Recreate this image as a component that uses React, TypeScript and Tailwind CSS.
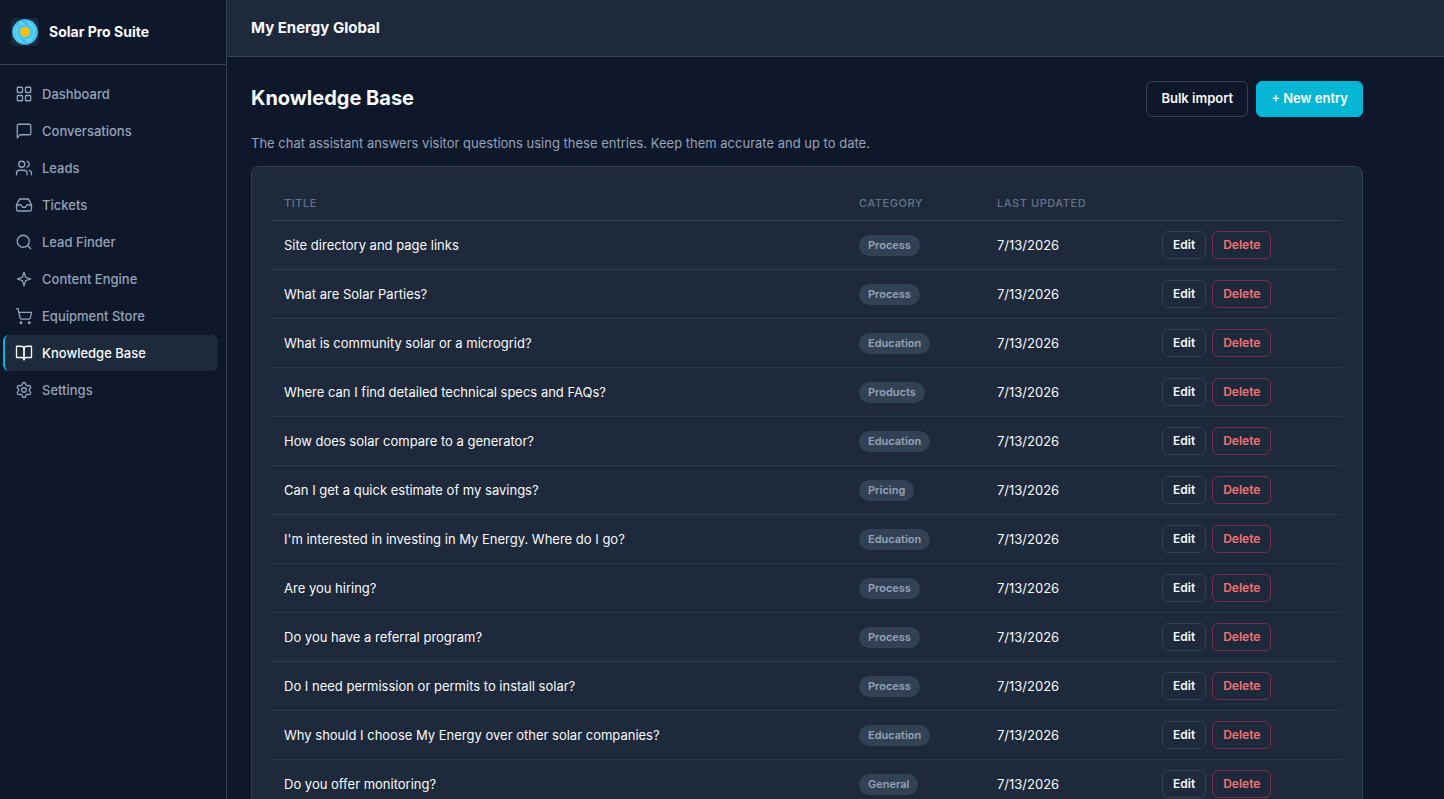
import clsx from 'clsx'
import {
  Inbox,
  LayoutGrid,
  Search,
  Settings,
  ShoppingCart,
  Users,
} from 'lucide-react'
import { ComponentType, SVGProps } from 'react'

type IconProps = SVGProps<SVGSVGElement>

const Stroke = ({ children, ...props }: IconProps) => (
  <svg
    viewBox="0 0 24 24"
    fill="none"
    stroke="currentColor"
    strokeLinecap="round"
    strokeLinejoin="round"
    {...props}
  >
    {children}
  </svg>
)

const Chat = (props: IconProps) => (
  <Stroke {...props}>
    <path d="M21 15a2 2 0 0 1-2 2H7l-4 4V5a2 2 0 0 1 2-2h14a2 2 0 0 1 2 2z" />
  </Stroke>
)

const Spark = (props: IconProps) => (
  <Stroke {...props}>
    <path d="M12 3l2.2 6.8L21 12l-6.800 2.200L12 21l-2.200-6.800L3 12l6.800-2.200z" />
  </Stroke>
)

const Book = (props: IconProps) => (
  <Stroke {...props}>
    <path d="M2 3h6a4 4 0 0 1 4 4v14a3 3 0 0 0-3-3H2z" />
    <path d="M22 3h-6a4 4 0 0 0-4 4v14a3 3 0 0 1 3-3h7z" />
  </Stroke>
)

const Logo = () => (
  <svg className="size-7 shrink-0" viewBox="0 0 28 28" aria-hidden="true">
    <rect width="28" height="28" rx="5" fill="#1b2a3f" />
    <circle cx="14" cy="14" r="12.8" fill="#45c6f3" />
    <path d="M11 3.500c3-.5 5.500 1 6.500 3.500-2-1.500-4-2-6.500-3.500z" fill="#1b7cc0" />
    <path d="M17 24.500c-3 .5-5.500-1-6.500-3.500 2 1.500 4 2 6.500 3.500z" fill="#1b7cc0" />
    <path d="M8.500 5.500c8-3 15 1.500 14.500 9-.5 5-4 7.500-8 7.500" fill="none" stroke="#8be0f9" strokeWidth="0.800" />
    <path d="M19.500 22.500c-8 3-15-1.500-14.500-9 .5-5 4-7.500 8-7.500" fill="none" stroke="#8be0f9" strokeWidth="0.800" />
    <circle cx="14" cy="14" r="5" fill="#fbbf14" />
  </svg>
)

type NavItem = {
  label: string
  icon: ComponentType<{ className?: string; strokeWidth?: number }>
}

const navItems: NavItem[] = [
  { label: 'Dashboard', icon: LayoutGrid },
  { label: 'Conversations', icon: Chat },
  { label: 'Leads', icon: Users },
  { label: 'Tickets', icon: Inbox },
  { label: 'Lead Finder', icon: Search },
  { label: 'Content Engine', icon: Spark },
  { label: 'Equipment Store', icon: ShoppingCart },
  { label: 'Knowledge Base', icon: Book },
  { label: 'Settings', icon: Settings },
]

const entries = [
  { title: 'Site directory and page links', category: 'Process' },
  { title: 'What are Solar Parties?', category: 'Process' },
  { title: 'What is community solar or a microgrid?', category: 'Education' },
  { title: 'Where can I find detailed technical specs and FAQs?', category: 'Products' },
  { title: 'How does solar compare to a generator?', category: 'Education' },
  { title: 'Can I get a quick estimate of my savings?', category: 'Pricing' },
  { title: "I'm interested in investing in My Energy. Where do I go?", category: 'Education' },
  { title: 'Are you hiring?', category: 'Process' },
  { title: 'Do you have a referral program?', category: 'Process' },
  { title: 'Do I need permission or permits to install solar?', category: 'Process' },
  { title: 'Why should I choose My Energy over other solar companies?', category: 'Education' },
  { title: 'Do you offer monitoring?', category: 'General' },
]

const Sidebar = () => (
  <aside className="flex w-[227px] shrink-0 flex-col border-r border-[#334155]">
    <div className="flex h-[65px] items-center gap-2.5 border-b border-[#334155] px-[11px]">
      <Logo />
      <span className="text-sm font-bold">Solar Pro Suite</span>
    </div>
    <nav className="flex flex-col gap-px pt-[11px] pr-2 pl-[3px]">
      {navItems.map(({ label, icon: Icon }) => {
        const active = label === 'Knowledge Base'
        return (
          <a
            key={label}
            href="#"
            aria-current={active ? 'page' : undefined}
            className={clsx(
              'flex h-9 items-center gap-[9px] rounded-md border-l-2 pl-2.5 text-[13px] leading-5 font-medium',
              active
                ? 'border-[#06b6d4] bg-[#1e293b] text-[#f8fafc]'
                : 'border-transparent text-[#94a3b8]'
            )}
          >
            <Icon className="size-[18px] shrink-0" strokeWidth={1.75} />
            {label}
          </a>
        )
      })}
    </nav>
  </aside>
)

const EntryTable = () => (
  <table className="w-full table-fixed text-left">
    <thead>
      <tr className="h-[33px] border-b border-[#334155] text-[11px] tracking-wider text-[#64748b] uppercase">
        <th className="px-3 font-medium">Title</th>
        <th className="w-[138px] px-3 font-medium">Category</th>
        <th className="w-[165px] px-3 font-medium">Last updated</th>
        <th className="w-[192px] px-3" aria-label="Actions" />
      </tr>
    </thead>
    <tbody>
      {entries.map(({ title, category }) => (
        <tr key={title} className="h-[49px] border-b border-[#334155]/60 text-[13px]">
          <td className="px-3 pt-0.5">{title}</td>
          <td className="px-3 pt-0.5">
            <span className="inline-flex h-[21px] items-center rounded-full bg-[#334155] px-[9px] text-[11px] font-semibold text-[#94a3b8]">
              {category}
            </span>
          </td>
          <td className="px-3 pt-0.5">7/13/2026</td>
          <td className="px-3">
            <div className="flex gap-1.5">
              <button
                type="button"
                className="h-7 rounded-md border border-[#334155] px-2.5 text-xs font-semibold"
              >
                Edit
              </button>
              <button
                type="button"
                className="h-7 rounded-md border border-[#f43f5e]/40 px-2.5 text-xs font-semibold text-[#f87171]"
              >
                Delete
              </button>
            </div>
          </td>
        </tr>
      ))}
    </tbody>
  </table>
)

export const App = () => (
  <div className="flex h-screen overflow-hidden bg-[#0f172a] font-[Inter,sans-serif] text-[#f8fafc]">
    <Sidebar />
    <div className="flex min-w-0 flex-1 flex-col">
      <header className="flex h-[57px] shrink-0 items-center border-b border-[#334155] bg-[#1e293b] px-6">
        <span className="text-[15px] font-bold">My Energy Global</span>
      </header>
      <main className="min-h-0 max-w-[1160px] flex-1 overflow-hidden p-6">
        <div className="flex items-start justify-between">
          <h1 className="text-xl leading-[34px] font-bold">Knowledge Base</h1>
          <div className="flex gap-2">
            <button
              type="button"
              className="h-9 rounded-md border border-[#334155] px-3.5 text-[13px] font-semibold"
            >
              Bulk import
            </button>
            <button
              type="button"
              className="h-9 rounded-md border border-[#06b6d4] bg-[#06b6d4] px-3.5 text-[13px] font-semibold text-white"
            >
              + New entry
            </button>
          </div>
        </div>
        <p className="mt-4 mb-3 text-[13px] leading-[21px] text-[#94a3b8]">
          The chat assistant answers visitor questions using these entries. Keep them accurate and up
          to date.
        </p>
        <section className="rounded-lg border border-[#334155] bg-[#1e293b] p-5">
          <EntryTable />
        </section>
      </main>
    </div>
  </div>
)

export default App
